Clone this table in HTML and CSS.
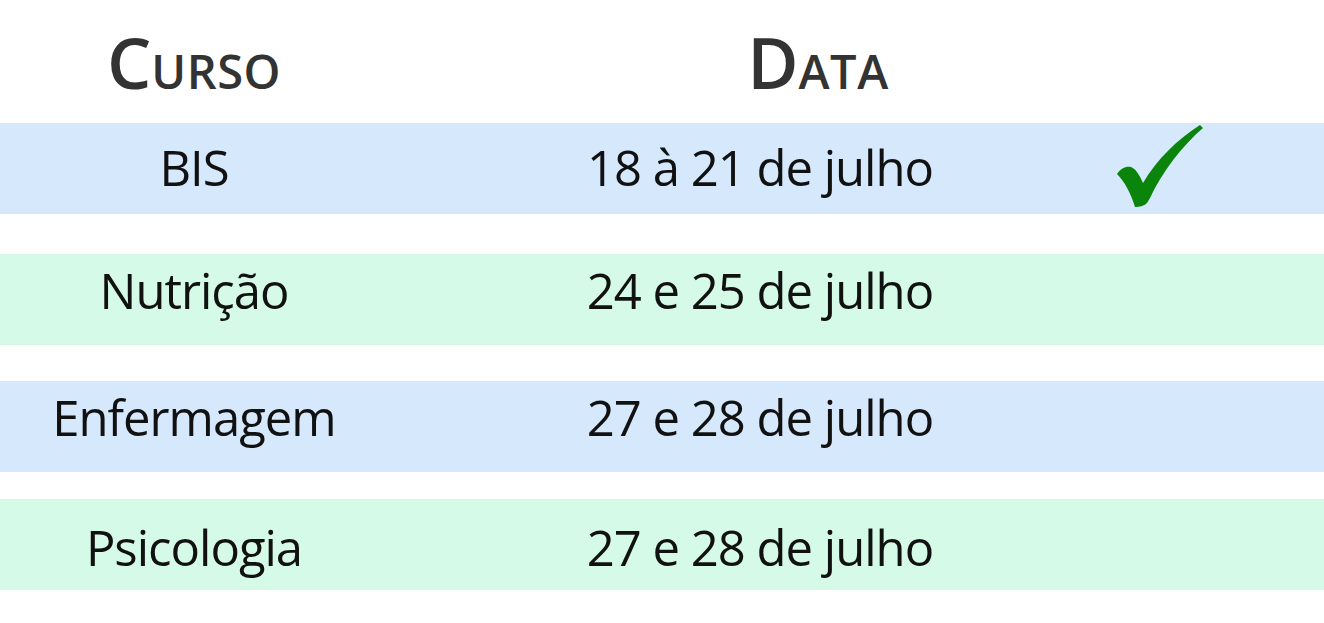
FILE: index.html
```html
<!DOCTYPE html>
<html lang="pt">
<head>
<meta charset="utf-8">
<title>Cursos</title>
<link rel="stylesheet" href="styles.css">
</head>
<body>
<div class="table">
  <div class="head">
    <div class="hcell course">C<span class="sc">URSO</span></div>
    <div class="hcell date">D<span class="sc">ATA</span></div>
    <div class="hcell"></div>
  </div>
  <div class="row blue r1">
    <div class="cell course">BIS</div>
    <div class="cell date">18 à 21 de julho</div>
    <div class="cell check">
      <svg class="tick" viewBox="0 0 86 84" width="86" height="84" aria-hidden="true">
        <path d="M0,50 C4,44 9,42 14,43 C19,45 23,52 26,59 C40,35 60,16 83,1 L86,4 C65,22 45,48 33,74 L30,79 C27,82 22,83 18,83 C14,70 8,58 0,50 Z" fill="#0a840a"/>
      </svg>
    </div>
  </div>
  <div class="row green r2">
    <div class="cell course">Nutrição</div>
    <div class="cell date">24 e 25 de julho</div>
    <div class="cell"></div>
  </div>
  <div class="row blue r3">
    <div class="cell course">Enfermagem</div>
    <div class="cell date">27 e 28 de julho</div>
    <div class="cell"></div>
  </div>
  <div class="row green r4">
    <div class="cell course">Psicologia</div>
    <div class="cell date">27 e 28 de julho</div>
    <div class="cell"></div>
  </div>
</div>
</body>
</html>
```
FILE: styles.css
```css
html, body {
  margin: 0;
  padding: 0;
  background: #ffffff;
}
body {
  font-family: "Open Sans", "Noto Sans", sans-serif;
  width: 1324px;
  height: 623px;
  overflow: hidden;
}
.table {
  display: flex;
  flex-direction: column;
}
.head,
.row {
  display: grid;
  grid-template-columns: 388px 720px 1fr;
}
.head {
  height: 123px;
  box-sizing: border-box;
  padding-top: 27px;
  color: #333333;
  font-weight: 600;
  font-size: 70px;
  line-height: 70px;
}
.hcell {
  text-align: center;
}
.head .sc {
  font-size: 47px;
  line-height: 1;
  letter-spacing: 0.5px;
}
.head .date {
  padding-left: 140px;
}
.row {
  height: 91px;
  box-sizing: border-box;
  color: #111111;
  font-size: 49px;
  line-height: 49px;
  letter-spacing: -1px;
}
.blue { background: #d5e8fc; }
.green { background: #d5fbe8; }
.r1 { padding-top: 20px; }
.r2 { margin-top: 40px; padding-top: 12px; }
.r3 { margin-top: 36px; padding-top: 12px; }
.r4 { margin-top: 27px; padding-top: 24px; }
.cell {
  text-align: center;
}
.row .date {
  padding-left: 24px;
}
.check {
  text-align: left;
  padding-left: 9px;
  margin-top: -19px;
}
.tick {
  display: block;
}
```
